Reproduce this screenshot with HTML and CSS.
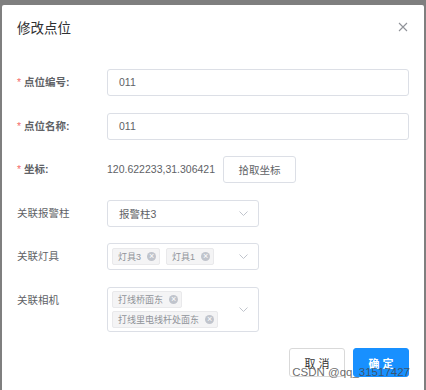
FILE: index.html
```html
<!DOCTYPE html>
<html lang="zh-CN">
	<head>
		<meta charset="UTF-8" />
		<meta name="viewport" content="width=device-width, initial-scale=1.0" />
		<title>修改点位</title>
		<link rel="stylesheet" href="styles.css">
	</head>
	<body>
		<div class="dialog">
			<div class="dialog-header">
				<span class="dialog-title">修改点位</span>
				<svg class="dialog-close" width="10" height="10" viewBox="0 0 10 10">
					<path d="M1 1L9 9M9 1L1 9" stroke="#909399" stroke-width="1.1" fill="none" />
				</svg>
			</div>

			<div class="dialog-body">
				<div class="form-item">
					<label class="form-label required">点位编号:</label>
					<div class="input">011</div>
				</div>
				<div class="form-item">
					<label class="form-label required">点位名称:</label>
					<div class="input">011</div>
				</div>
				<div class="form-item">
					<label class="form-label required">坐标:</label>
					<span class="coord">120.622233,31.306421</span>
					<button class="btn btn-pick">拾取坐标</button>
				</div>
				<div class="form-item">
					<label class="form-label">关联报警柱</label>
					<div class="select">
						<span class="select-value">报警柱3</span>
						<svg class="arrow" width="9" height="5" viewBox="0 0 9 5">
							<path d="M0.5 0.5L4.5 4.5L8.5 0.5" stroke="#c0c4cc" stroke-width="1" fill="none" />
						</svg>
					</div>
				</div>
				<div class="form-item">
					<label class="form-label">关联灯具</label>
					<div class="select multi">
						<div class="tags">
							<span class="tag">灯具3<i class="tag-close">×</i></span>
							<span class="tag">灯具1<i class="tag-close">×</i></span>
						</div>
						<svg class="arrow" width="9" height="5" viewBox="0 0 9 5">
							<path d="M0.5 0.5L4.5 4.5L8.5 0.5" stroke="#c0c4cc" stroke-width="1" fill="none" />
						</svg>
					</div>
				</div>
				<div class="form-item">
					<label class="form-label">关联相机</label>
					<div class="select multi">
						<div class="tags">
							<span class="tag">打线桥面东<i class="tag-close">×</i></span>
							<span class="tag">打线里电线杆处面东<i class="tag-close">×</i></span>
						</div>
						<svg class="arrow" width="9" height="5" viewBox="0 0 9 5">
							<path d="M0.5 0.5L4.5 4.5L8.5 0.5" stroke="#c0c4cc" stroke-width="1" fill="none" />
						</svg>
					</div>
				</div>
			</div>

			<div class="dialog-footer">
				<button class="btn btn-cancel">取消</button>
				<button class="btn btn-ok">确定</button>
			</div>
		</div>
		<div class="watermark">CSDN @qq_31517427</div>
	</body>
</html>
```

FILE: styles.css
```css
body {
	margin: 0;
	height: 390px;
	overflow: hidden;
	background-color: #7f7f7f;
	font-family: "Liberation Sans", "Noto Sans CJK SC", sans-serif;
	position: relative;
}

.dialog {
	margin: 5px 2px 0;
	height: 385px;
	background: #fff;
	border-radius: 2px 2px 0 0;
}

.dialog-header {
	display: flex;
	justify-content: space-between;
	align-items: center;
	padding: 15px 16px 0 15px;
	height: 18px;
}

.dialog-title {
	font-size: 13.5px;
	line-height: 18px;
	color: #303133;
}

.dialog-close {
	margin-top: -4px;
}

.dialog-body {
	padding: 31px 15px 0;
}

.form-item {
	display: flex;
	align-items: flex-start;
	margin-bottom: 16.5px;
}

.form-label {
	width: 90px;
	flex-shrink: 0;
	line-height: 27px;
	font-size: 10.5px;
	color: #606266;
}

.form-label.required {
	font-weight: bold;
}

.form-label.required::before {
	content: "*";
	color: #f56c6c;
	font-weight: normal;
	margin-right: 3px;
}

.input {
	box-sizing: border-box;
	width: 302px;
	height: 27px;
	line-height: 25px;
	padding: 0 11px;
	border: 1px solid #dcdfe6;
	border-radius: 3px;
	font-size: 10.5px;
	color: #606266;
}

.coord {
	line-height: 27px;
	font-size: 10.5px;
	color: #606266;
}

.btn {
	box-sizing: border-box;
	border: 1px solid #dcdfe6;
	border-radius: 3px;
	background: #fff;
	font-family: inherit;
	font-size: 10.5px;
	color: #606266;
	padding: 0;
	cursor: pointer;
}

.btn-pick {
	width: 73px;
	height: 27px;
	margin-left: 8px;
}

.select {
	box-sizing: border-box;
	width: 152px;
	height: 27px;
	display: flex;
	align-items: center;
	justify-content: space-between;
	padding: 0 10px 0 11px;
	border: 1px solid #dcdfe6;
	border-radius: 3px;
	font-size: 10.5px;
	color: #606266;
}

.select.multi {
	height: auto;
	min-height: 27px;
	padding: 3px 10px 3px 4px;
}

.tags {
	display: flex;
	flex-wrap: wrap;
	gap: 3px 6px;
	width: 112px;
}

.tag {
	box-sizing: border-box;
	display: inline-flex;
	align-items: center;
	height: 17px;
	padding: 0 3px 0 5px;
	background: #f4f4f5;
	border: 1px solid #e9e9eb;
	border-radius: 2px;
	font-size: 9px;
	color: #909399;
	white-space: nowrap;
}

.tag-close {
	display: inline-flex;
	align-items: center;
	justify-content: center;
	width: 9px;
	height: 9px;
	margin-left: 6px;
	border-radius: 50%;
	background: #c0c4cc;
	color: #fff;
	font-style: normal;
	font-size: 9px;
	line-height: 9px;
}

.dialog-footer {
	display: flex;
	justify-content: flex-end;
	gap: 8px;
	padding: 0 15px;
}

.btn-cancel,
.btn-ok {
	width: 56px;
	height: 29px;
	font-size: 11px;
	letter-spacing: 3px;
	text-indent: 3px;
}

.btn-cancel {
	border-color: #d9d9d9;
	color: #333;
}

.btn-ok {
	background: #1890ff;
	border-color: #1890ff;
	color: #fff;
	font-weight: bold;
}

.watermark {
	position: absolute;
	right: 16px;
	top: 366px;
	font-size: 11.5px;
	color: rgba(70, 70, 70, 0.8);
}
```
